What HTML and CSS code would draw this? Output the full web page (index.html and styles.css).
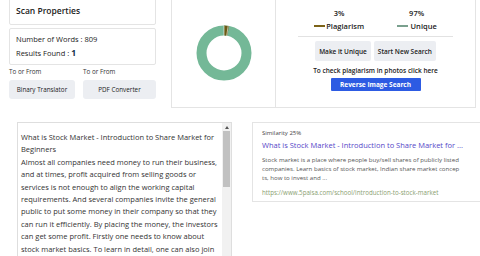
FILE: index.html
```html
<!DOCTYPE html>
<html>
<head>
<meta charset="utf-8">
<link rel="stylesheet" href="styles.css">
</head>
<body>
<div class="top">
  <div class="left">
    <div class="box scan">Scan Properties</div>
    <div class="box results">
      <div>Number of Words : 809</div>
      <div>Results Found : <b>1</b></div>
    </div>
    <div class="tools">
      <div class="tool t1">
        <div class="tlabel">To or From</div>
        <div class="tbtn">Binary Translator</div>
      </div>
      <div class="tool t2">
        <div class="tlabel">To or From</div>
        <div class="tbtn">PDF Converter</div>
      </div>
    </div>
  </div>
  <div class="panel">
    <div class="chart">
      <svg width="56" height="56" viewBox="0 0 56 56">
        <circle cx="28" cy="28" r="22.5" fill="none" stroke="#74b897" stroke-width="10"/>
        <circle cx="28" cy="28" r="22.5" fill="none" stroke="#6a5a14" stroke-width="10" stroke-dasharray="4.24 200" transform="rotate(-90 28 28)"/>
        <line x1="28" y1="0.5" x2="28" y2="11" stroke="#fff" stroke-width="0.6"/>
        <line x1="32.2" y1="0.8" x2="30.6" y2="11.2" stroke="#fff" stroke-width="0.6"/>
      </svg>
    </div>
    <div class="stats">
      <div class="pcts">
        <div class="pct">
          <div class="num">3%</div>
          <div class="leg"><span class="line olive"></span>Plagiarism</div>
        </div>
        <div class="pct">
          <div class="num">97%</div>
          <div class="leg"><span class="line green"></span> Unique</div>
        </div>
      </div>
      <div class="actions">
        <div class="abtn">Make it Unique</div>
        <div class="abtn">Start New Search</div>
      </div>
      <div class="photo">To check plagiarism in photos click here</div>
      <div class="rev">Reverse Image Search</div>
    </div>
  </div>
</div>
<div class="bottom">
  <div class="textbox">
    <div class="text">
      <p>What is Stock Market - Introduction to Share Market for Beginners</p>
      <p>Almost all companies need money to run their business, and at times, profit acquired from selling goods or services is not enough to align the working capital requirements. And several companies invite the general public to put some money in their company so that they can run it efficiently. By placing the money, the investors can get some profit. Firstly one needs to know about stock market basics. To learn in detail, one can also join</p>
    </div>
    <div class="scroll">
      <div class="arrow"></div>
      <div class="thumb"></div>
    </div>
  </div>
  <div class="card">
    <div class="sim">Similarity 25%</div>
    <div class="ctitle">What is Stock Market - Introduction to Share Market for ...</div>
    <div class="desc">Stock market is a place where people buy/sell shares of publicly listed<br>companies. Learn basics of stock market, Indian share market concep<br>ts, how to invest and ...</div>
    <div class="url">https://www.5paisa.com/school/introduction-to-stock-market</div>
  </div>
</div>
</body>
</html>
```
FILE: styles.css
```css
* { box-sizing: border-box; }
html, body { margin: 0; padding: 0; background: #fff; overflow: hidden; }
body {
  font-family: "Open Sans", "DejaVu Sans", sans-serif;
  color: #222;
  width: 480px;
  height: 256px;
}
.top { display: flex; margin-top: -6px; }
.left { width: 147px; margin-left: 9px; }
.box { border: 1px solid #e4e4e4; border-radius: 2px; }
.scan {
  height: 31px;
  padding: 10px 0 0 6px;
  font-size: 8.5px;
  font-weight: 600;
  color: #222;
}
.results {
  margin-top: 3px;
  height: 37px;
  padding: 3px 0 0 6px;
  font-size: 7.5px;
  font-weight: 500;
  line-height: 14px;
  color: #222;
}
.results b { font-weight: 700; color: #14304a; font-size: 8.5px; }
.tools { display: flex; gap: 8px; margin-top: 2px; }
.tool { display: flex; flex-direction: column; }
.t1 { width: 66px; }
.t2 { width: 73px; }
.tlabel { font-size: 6.3px; height: 10px; line-height: 10px; color: #333; }
.tbtn {
  margin-top: 3px;
  height: 19px;
  background: #eceef2;
  border-radius: 3px;
  font-size: 6.3px;
  display: flex; align-items: center; justify-content: center;
  color: #222;
}
.panel {
  display: flex;
  margin-left: 15px;
  height: 114px;
  border: 1px solid #e4e4e4;
  border-top: none;
}
.chart {
  width: 104px;
  border-right: 1px solid #e4e4e4;
  display: flex; align-items: center; justify-content: center;
  padding-top: 4px;
}
.stats {
  width: 199px;
  display: flex; flex-direction: column; align-items: center;
  padding-top: 13px;
}
.pcts {
  width: 155px;
  display: flex; justify-content: space-around;
  border-bottom: 1px solid #e2e2e2;
  padding-bottom: 3px;
}
.pct { display: flex; flex-direction: column; align-items: center; }
.num { font-size: 7.5px; font-weight: 600; line-height: 12px; }
.leg { font-size: 7.5px; font-weight: 600; line-height: 14px; display: flex; align-items: center; }
.line { display: inline-block; width: 11px; height: 2px; margin-right: 1px; }
.olive { background: #7c6318; }
.green { background: #7aa08e; margin-right: 3px; }
.actions { display: flex; gap: 3px; margin-top: 4px; }
.abtn {
  height: 20px;
  padding: 0 4px;
  background: #eceef2;
  border-radius: 2px;
  font-size: 6.5px;
  font-weight: 600;
  display: flex; align-items: center;
}
.photo { margin-top: 5px; font-size: 6.5px; font-weight: 600; line-height: 10px; }
.rev {
  margin-top: 2px;
  width: 90px;
  height: 13px;
  background: #2d5be3;
  color: #fff;
  font-size: 6.5px;
  font-weight: 700;
  display: flex; align-items: center; justify-content: center;
  border-radius: 1px;
}
.bottom { display: flex; margin-top: 14px; }
.textbox {
  margin-left: 17px;
  width: 215px;
  flex-shrink: 0;
  height: 150px;
  border: 1px solid #dedede;
  display: flex;
}
.text {
  flex: 1;
  padding: 8px 0 0 3px;
  font-size: 7.5px;
  line-height: 12.4px;
  color: #333;
}
.text p { margin: 0; }
.scroll { width: 9px; background: #f1f1f1; display: flex; flex-direction: column; align-items: center; }
.arrow {
  margin-top: 3px;
  width: 0; height: 0;
  border-left: 2px solid transparent;
  border-right: 2px solid transparent;
  border-bottom: 3px solid #555;
}
.thumb { margin-top: 2px; width: 7px; height: 56px; background: #c1c1c1; }
.card {
  margin-left: 20px;
  width: 236px;
  flex-shrink: 0;
  height: 80px;
  border: 1px solid #e4e4e4;
  padding: 5px 0 0 9px;
}
.sim { font-size: 6px; line-height: 11px; color: #444; }
.ctitle { font-size: 7.5px; line-height: 13px; color: #5647c8; white-space: nowrap; }
.desc { margin-top: 3px; font-size: 6.1px; line-height: 9px; color: #555; white-space: nowrap; }
.url { margin-top: 6px; font-size: 6.2px; color: #8aa070; white-space: nowrap; }
```
